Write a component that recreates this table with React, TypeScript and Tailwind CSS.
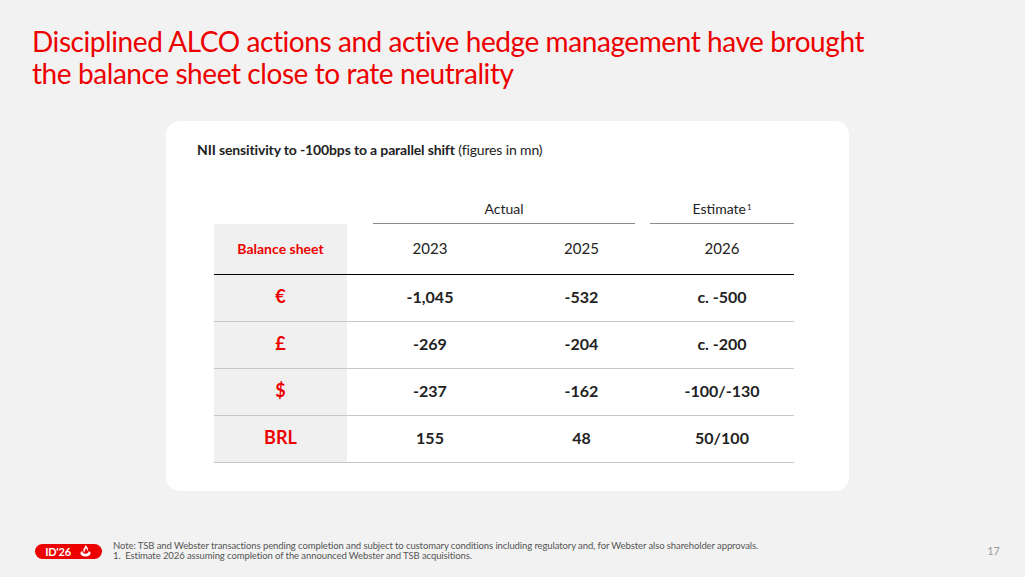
import React from 'react';

const rows = [
  { label: '€', a: '-1,045', b: '-532', c: 'c. -500' },
  { label: '£', a: '-269', b: '-204', c: 'c. -200' },
  { label: '$', a: '-237', b: '-162', c: '-100/-130' },
  { label: 'BRL', a: '155', b: '48', c: '50/100' },
];

// Santander-like flame mark
const Flame = () => (
  <svg width="13" height="12" viewBox="0 0 20 20" fill="white">
    <path d="M10.5 0c1.8 2.8 3.6 4.6 3.6 7.4 0 1.2-.5 2.1-1.2 2.8.2-2-.9-3.8-2.5-5.4.3 2.3-1.9 3.6-1.9 5.7 0 .9.3 1.6.9 2.2C7 11.900 6.3 10.4 6.3 8.8 6.3 5.6 9.4 3.4 10.5 0z" />
    <path d="M4.6 10.2C2.6 11.1 1.5 12.3 1.5 13.6c0 3 3.8 5.4 8.5 5.4s8.5-2.4 8.5-5.4c0-1.3-1.1-2.5-3.1-3.4.2 2.6-2.6 4.6-5.4 4.6s-5.6-2-5.4-4.6z" />
  </svg>
);

export default function App() {
  return (
    <div className="w-[1025px] h-[577px] bg-[#f2f2f2] flex flex-col" style={{ fontFamily: 'Lato, "Open Sans", sans-serif' }}>
      <h1 className="pl-8 pt-[25px] text-[28px] leading-[32px] text-[#ec0000] tracking-[-0.015em]">
        Disciplined ALCO actions and active hedge management have brought
        <br />
        the balance sheet close to rate neutrality
      </h1>

      <div className="ml-[166px] mt-[32px] w-[683px] h-[370px] bg-white rounded-[14px]">
        <div className="pt-[20px] pl-[31px] text-[14px] leading-[18px] text-[#222] tracking-[-0.01em]">
          <span className="font-bold">NII sensitivity to -100bps to a parallel shift</span> (figures in mn)
        </div>

        <div className="ml-[48px] mt-[30px] w-[580px] grid grid-cols-[133px_166px_137px_144px] text-[#222]">
          {/* group header */}
          <div className="h-[35px]" />
          <div className="col-span-2 ml-[26px] mr-[15px] h-[35px] flex items-end justify-center pb-[4px] border-b border-[#8c8c8c] text-[14px]">
            Actual
          </div>
          <div className="h-[35px] flex items-end justify-center pb-[4px] border-b border-[#8c8c8c] text-[14px]">
            <span>
              Estimate<sup className="text-[8px] ml-[1px]">1</sup>
            </span>
          </div>

          {/* year row */}
          <div className="h-[51px] pb-[2px] bg-[#f0f0f0] border-b border-black flex items-center justify-center text-[14px] font-bold text-[#ec0000]">
            Balance sheet
          </div>
          <div className="h-[51px] pb-[2px] border-b border-black flex items-center justify-center text-[15px]">2023</div>
          <div className="h-[51px] pb-[2px] border-b border-black flex items-center justify-center text-[15px]">2025</div>
          <div className="h-[51px] pb-[2px] border-b border-black flex items-center justify-center text-[15px]">2026</div>

          {rows.map((r) => (
            <React.Fragment key={r.label}>
              <div className="h-[47px] pb-[3px] bg-[#f0f0f0] border-b border-[#c8c8c8] flex items-center justify-center text-[18px] font-bold text-[#ec0000]">
                {r.label}
              </div>
              <div className="h-[47px] pb-[3px] border-b border-[#c8c8c8] flex items-center justify-center text-[16px] font-bold">{r.a}</div>
              <div className="h-[47px] pb-[3px] border-b border-[#c8c8c8] flex items-center justify-center text-[16px] font-bold">{r.b}</div>
              <div className="h-[47px] pb-[3px] border-b border-[#c8c8c8] flex items-center justify-center text-[16px] font-bold">{r.c}</div>
            </React.Fragment>
          ))}
        </div>
      </div>

      <div className="mt-[50px] flex items-center pl-[35px] pr-[25px]">
        <div className="w-[67px] h-[15px] rounded-full bg-[#ec0000] flex items-center justify-center gap-[8px]">
          <span className="text-white text-[11px] font-bold leading-none tracking-[-0.02em]">ID'26</span>
          <Flame />
        </div>
        <div className="ml-[11px] text-[9.5px] leading-[10px] text-[#555] tracking-[-0.01em]">
          <div>Note: TSB and Webster transactions pending completion and subject to customary conditions including regulatory and, for Webster also shareholder approvals.</div>
          <div>1.&nbsp; Estimate 2026 assuming completion of the announced Webster and TSB acquisitions.</div>
        </div>
        <div className="ml-auto text-[11px] text-[#9a9a9a]">17</div>
      </div>
    </div>
  );
}
